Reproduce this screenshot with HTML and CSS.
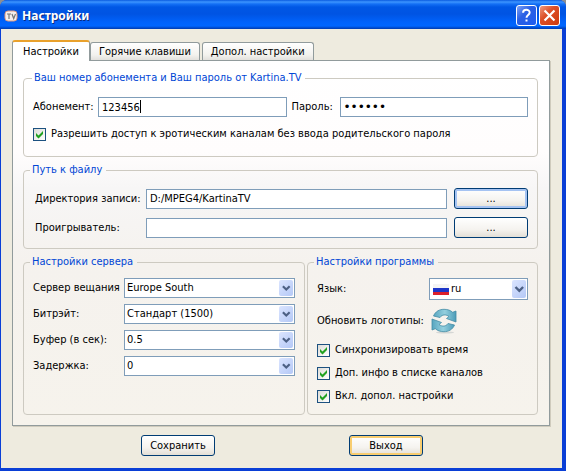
FILE: index.html
```html
<!DOCTYPE html>
<html lang="ru">
<head>
<meta charset="utf-8">
<title>Настройки</title>
<link rel="stylesheet" href="styles.css">
</head>
<body>
<svg class="defs" aria-hidden="true">
  <defs>
    <linearGradient id="teal" x1="0" y1="0" x2="1" y2="0">
      <stop offset="0" stop-color="#58a6c0"/><stop offset="0.5" stop-color="#93cfde"/><stop offset="1" stop-color="#4c9cb8"/>
    </linearGradient>
    <symbol id="chevron" viewBox="0 0 14 18"><path d="M3.5 7 L7.3 10.8 L11.1 7" fill="none" stroke="#4d6185" stroke-width="2.4"/></symbol>
    <symbol id="tick" viewBox="0 0 11 11"><path d="M2 4v3L4.500 9.500L9 5V2L4.500 6.500z" fill="#21a121"/></symbol>
  </defs>
</svg>
<form class="window">
  <header class="titlebar">
    <svg class="app-icon" viewBox="0 0 14 14" aria-hidden="true">
      <rect x="1" y="2" width="12" height="10" rx="3" fill="#f6efed" stroke="#dd9a80"/>
      <path d="M3 5h4M5 5v5M8 5l1.700 4.500L11.500 5" fill="none" stroke="#777" stroke-width="1.200"/>
    </svg>
    <h1>Настройки</h1>
    <button type="button" class="sys help" aria-label="Справка">
      <svg viewBox="0 0 21 21"><path d="M6.700 7.500C6.700 3.200 14 3.200 14 7.300c0 2.700-3.500 2.700-3.500 5.700M10.500 14.800v2.400" fill="none" stroke="#fff" stroke-width="2.200"/></svg>
    </button>
    <button type="button" class="sys close" aria-label="Закрыть">
      <svg viewBox="0 0 21 21"><path d="M5 5l11 11M16 5l-11 11" fill="none" stroke="#fff" stroke-width="2.400"/></svg>
    </button>
  </header>
  <main class="body">
    <nav class="tabs" role="tablist">
      <button type="button" role="tab" aria-selected="true" class="tab active">Настройки</button>
      <button type="button" role="tab" class="tab">Горячие клавиши</button>
      <button type="button" role="tab" class="tab">Допол. настройки</button>
    </nav>
    <section class="panel">
      <fieldset class="account">
        <legend>Ваш номер абонемента и Ваш пароль от Kartina.TV</legend>
        <div class="login">
          <label for="account">Абонемент:</label>
          <span class="entry"><input id="account" type="text" value="123456"><i class="caret"></i></span>
          <label for="password">Пароль:</label>
          <input id="password" type="password" value="123456">
        </div>
        <label class="check"><input type="checkbox" checked><span class="box"><svg><use href="#tick"/></svg></span>Разрешить доступ к эротическим каналам без ввода родительского пароля</label>
      </fieldset>
      <fieldset class="paths">
        <legend>Путь к файлу</legend>
        <div class="files">
          <label for="dir">Директория записи:</label>
          <input id="dir" type="text" value="D:/MPEG4/KartinaTV">
          <button type="button" class="btn focus" aria-label="Выбрать директорию">...</button>
          <label for="player">Проигрыватель:</label>
          <input id="player" type="text">
          <button type="button" class="btn" aria-label="Выбрать проигрыватель">...</button>
        </div>
      </fieldset>
      <div class="columns">
        <fieldset>
          <legend>Настройки сервера</legend>
          <div class="server">
            <label for="server">Сервер вещания</label>
            <span class="combo"><select id="server"><option>Europe South</option></select><svg><use href="#chevron"/></svg></span>
            <label for="bitrate">Битрэйт:</label>
            <span class="combo"><select id="bitrate"><option>Стандарт (1500)</option></select><svg><use href="#chevron"/></svg></span>
            <label for="buffer">Буфер (в сек):</label>
            <span class="combo"><select id="buffer"><option>0.5</option></select><svg><use href="#chevron"/></svg></span>
            <label for="delay">Задержка:</label>
            <span class="combo"><select id="delay"><option>0</option></select><svg><use href="#chevron"/></svg></span>
          </div>
        </fieldset>
        <fieldset>
          <legend>Настройки программы</legend>
          <div class="program">
            <label for="lang">Язык:</label>
            <span class="combo lang"><select id="lang"><option>ru</option></select><i class="flag"></i><svg><use href="#chevron"/></svg></span>
            <span>Обновить логотипы:</span>
            <button type="button" class="refresh" aria-label="Обновить логотипы">
              <svg viewBox="0 0 26 26">
                <ellipse cx="14" cy="24.500" rx="9" ry="1" fill="#d5d7d5"/>
                <path d="M2.500 8C4.500 3.300 8.500 1.300 13 1.300c3.700 0 6.500 1 8.700 3L25 3V14L15.500 10.500l2.500-2C14.500 6 11 6.500 9 9.500z" fill="url(#teal)" stroke="#438ca4" stroke-width="0.800"/>
                <path d="M23.500 17c-2 4.700-6 6.700-10.500 6.700-3.700 0-6.500-1-8.700-3L1 22V11l9.500 3.500-2.500 2C11.500 19 15 18.500 17 15.500z" fill="url(#teal)" stroke="#438ca4" stroke-width="0.800"/>
              </svg>
            </button>
          </div>
          <div class="checks">
            <label class="check"><input type="checkbox" checked><span class="box"><svg><use href="#tick"/></svg></span>Синхронизировать время</label>
            <label class="check"><input type="checkbox" checked><span class="box"><svg><use href="#tick"/></svg></span>Доп. инфо в списке каналов</label>
            <label class="check"><input type="checkbox" checked><span class="box"><svg><use href="#tick"/></svg></span>Вкл. допол. настройки</label>
          </div>
        </fieldset>
      </div>
    </section>
    <footer class="actions">
      <button type="submit" class="btn">Сохранить</button>
      <button type="button" class="btn hot">Выход</button>
    </footer>
  </main>
</form>
</body>
</html>
```
FILE: styles.css
```css
* { box-sizing: border-box; }

body {
  margin: 0;
  background: #8d8f92;
  color: #000;
  font: 11px/14px "DejaVu Sans Condensed", Tahoma, sans-serif;
}

button, input, select { font: inherit; color: inherit; margin: 0; }
.defs { position: absolute; width: 0; height: 0; }

.window {
  display: flex;
  flex-direction: column;
  min-height: 100vh;
  border-radius: 7px 7px 0 0;
  overflow: hidden;
  background: #0a3fd6;
}

.titlebar {
  display: flex;
  align-items: center;
  gap: 2px;
  height: 29px;
  padding: 2px 6px 0 4px;
  background: linear-gradient(#0a5be0, #3d95ff 2px, #1470f5 4px, #0057e5 7px, #0054e3 14px, #0062fb 22px, #0066ff 26px, #0047c8 28px, #003cb0);
}
.app-icon { width: 14px; height: 14px; }
.titlebar h1 {
  flex: 1;
  margin: 0 0 0 2px;
  color: #fff;
  font: bold 12px/18px "Noto Sans", "Trebuchet MS", sans-serif;
  text-shadow: 1px 1px #0a2a80;
}
.sys {
  width: 21px;
  height: 21px;
  padding: 0;
  border: 1px solid #fff;
  border-radius: 3px;
}
.sys svg { display: block; width: 19px; height: 19px; }
.help { background: linear-gradient(135deg, #7fa3f5, #2b60e4 40%, #1f5cf0); }
.close { background: linear-gradient(135deg, #ee9a80, #dc4f27 40%, #cf3a0c); }

.body {
  flex: 1;
  display: flex;
  flex-direction: column;
  margin: 0 4px 3px 1px;
  padding: 11px 12px 12px 11px;
  background: #eeebdf;
}

.tabs { display: flex; align-items: flex-end; }
.tab {
  height: 18px;
  padding: 0 8px;
  border: 1px solid #919b9c;
  border-bottom: 0;
  border-radius: 3px 3px 0 0;
  background: linear-gradient(#fff, #f3f2ee 70%, #e2e0dc);
  white-space: nowrap;
}
.tab + .tab + .tab { margin-left: 2px; }
.tab.active {
  position: relative;
  height: 21px;
  margin-bottom: -1px;
  padding: 0 10px;
  border-top: 2px solid #e9a12c;
  background: #fff;
}

.panel {
  flex: 1;
  display: flex;
  flex-direction: column;
  gap: 6px;
  padding: 10px 11px 10px 10px;
  border: 1px solid #919b9c;
  box-shadow: 1px 1px #cfcbbd;
  background: linear-gradient(#fff, #fffdfd 25%, #f7f6f6 35%, #f5f2ee 55%, #f6f3ec);
}

fieldset {
  min-width: 0;
  margin: 0;
  padding: 12px 9px 0;
  border: 1px solid #cdcac1;
  border-radius: 4px;
}
legend { margin-left: -3px; padding: 0 4px 0 2px; color: #0046d5; }
.account legend { margin-left: -1px; }
.account, .paths { height: 86px; }

input[type="text"], input[type="password"], select {
  width: 100%;
  min-width: 0;
  height: 20px;
  padding: 0 3px;
  border: 1px solid #7f9db9;
  border-radius: 0;
  background: #fff;
  outline: 0;
}
input[type="password"] { font-family: "DejaVu Sans", sans-serif; font-size: 12px; }

.login {
  display: grid;
  grid-template-columns: 60px 1fr 43px 1fr;
  align-items: center;
  column-gap: 5px;
}
.entry { position: relative; }
.entry input { display: block; }
.caret { position: absolute; left: 42px; top: 3px; width: 1px; height: 13px; background: #000; }

.check { display: flex; align-items: center; gap: 5px; position: relative; }
.check input { position: absolute; width: 13px; height: 13px; margin: 0; opacity: 0; }
.box {
  width: 13px;
  height: 13px;
  border: 1px solid #1c5180;
  background: linear-gradient(135deg, #dcdcd7, #fff);
}
.box svg { display: block; width: 11px; height: 11px; }
.account .check { margin-top: 10px; }

.files {
  display: grid;
  grid-template-columns: 111px 1fr 81px;
  align-items: center;
  gap: 8px 0;
  padding-left: 2px;
}
.paths { padding-top: 11px; }
.files .btn { margin-left: 7px; }

.btn {
  width: 74px;
  height: 21px;
  padding: 0;
  border: 1px solid #003c74;
  border-radius: 3px;
  background: linear-gradient(#fff, #f5f3ef 60%, #e3dfd6);
  line-height: 17px;
}
.btn.focus { box-shadow: inset 0 0 0 2px #a5c3f2; }
.btn.hot { box-shadow: inset 0 0 0 2px #f8cd70; }

.columns { flex: 1; display: grid; grid-template-columns: 282fr 231fr; gap: 2px; }
.columns fieldset { padding-top: 9px; }

.server { display: grid; grid-template-columns: 91px 1fr; align-items: center; gap: 6px 0; }
.combo { position: relative; }
.combo select { display: block; appearance: none; padding: 0 18px 0 2px; }
.combo svg {
  position: absolute;
  right: 2px;
  top: 2px;
  width: 14px;
  height: calc(100% - 4px);
  border-radius: 2px;
  background: linear-gradient(135deg, #dbe5ff, #b4c8f6);
  pointer-events: none;
}
.program { display: grid; grid-template-columns: 1fr 99px; align-items: center; gap: 8px 0; }
.lang select { height: 22px; padding-left: 21px; }
.flag {
  position: absolute;
  left: 4px;
  top: 6px;
  width: 16px;
  height: 11px;
  background: linear-gradient(#f4f4f4 0 4px, #1c35c8 4px 8px, #dc1f2b 8px);
  pointer-events: none;
}
.refresh { width: 26px; height: 26px; margin-left: 2px; padding: 0; border: 0; background: none; }
.refresh svg { display: block; width: 26px; height: 26px; }
.checks { display: grid; gap: 9px; margin-top: 9px; }

.actions { display: flex; justify-content: space-between; padding: 9px 127px 0 129px; }
```
